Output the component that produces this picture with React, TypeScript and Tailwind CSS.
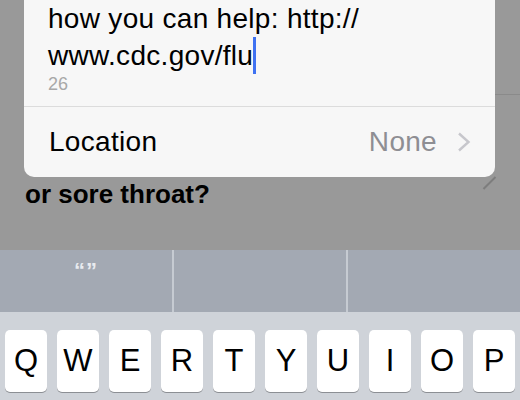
const keys = ["Q", "W", "E", "R", "T", "Y", "U", "I", "O", "P"];

export default function App() {
  return (
    <div className="relative flex h-[400px] w-[520px] flex-col overflow-hidden bg-[#999999] font-['Liberation_Sans',Arial,sans-serif]">
      {/* background content behind the sheet */}
      <div className="absolute right-0 top-[94px] h-px w-[30px] bg-[#8a8a8a]" />
      <div className="absolute left-[481px] top-[182px] h-[2px] w-[17px] -rotate-45 bg-[#7d7d7d]" />

      <div className="relative h-[250px] shrink-0">
        <div className="ml-[24px] w-[471px] rounded-b-[10px] bg-[#f7f7f7]">
          <div className="px-[24px] pb-[12px]">
            <p className="text-[28px] leading-[37px] tracking-[0.3px] text-black">
              how you can help: http://
              <br />
              www.cdc.gov/flu
              <span className="inline-block h-[37px] w-[3px] bg-[#3f72f2] align-top" />
            </p>
            <p className="text-[18px] leading-[20px] text-[#a8a8a8]">26</p>
          </div>
          <div className="h-px bg-[#dcdcdc]" />
          <div className="flex h-[70px] items-center pl-[25px] pr-[24px]">
            <span className="text-[28px] tracking-[0.3px] text-black">Location</span>
            <span className="ml-auto text-[28px] tracking-[0.3px] text-[#8e8e93]">None</span>
            <svg className="ml-[20px]" width="14" height="20" viewBox="0 0 14 20">
              <path d="M2 1.5 L11.5 10 L2 18.5" fill="none" stroke="#c7c7cc" strokeWidth="2.4" />
            </svg>
          </div>
        </div>
        <p className="ml-[25px] mt-[2px] text-[26px] font-bold leading-[30px] text-black">or sore throat?</p>
      </div>

      <div className="flex h-[62px] shrink-0 bg-[#a3a9b3]">
        <div className="flex w-[172px] justify-center pt-[9px]">
          <span className="text-[22px] font-bold leading-[24px] tracking-[1px] text-[#e8ebef]">“”</span>
        </div>
        <div className="w-[2px] bg-[#c6cbd2]" />
        <div className="w-[172px]" />
        <div className="w-[2px] bg-[#c6cbd2]" />
        <div className="flex-1" />
      </div>

      <div className="flex flex-1 gap-[10px] bg-[#cfd3d9] pl-[5px] pt-[18px]">
        {keys.map((k) => (
          <div
            key={k}
            className="flex h-[62px] w-[42px] items-center justify-center rounded-[5px] bg-white text-[31px] text-black shadow-[0_1px_0_#8c8f94]"
          >
            {k}
          </div>
        ))}
      </div>
    </div>
  );
}
